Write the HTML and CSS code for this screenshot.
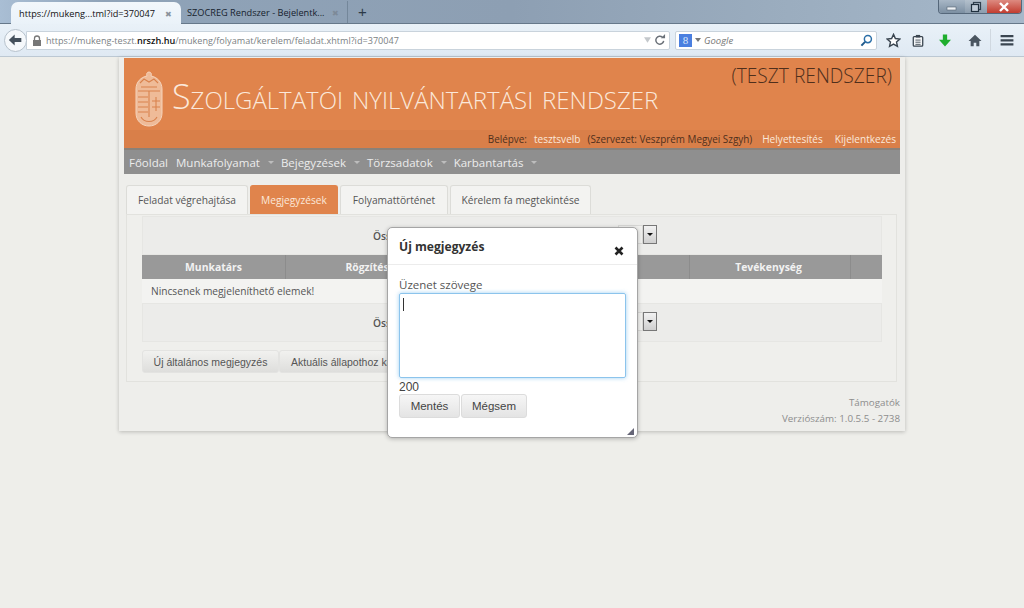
FILE: index.html
```html
<!DOCTYPE html>
<html lang="hu">
<head>
<meta charset="utf-8">
<title>Szolgáltatói nyilvántartási rendszer</title>
<link rel="stylesheet" href="styles.css">
</head>
<body>
<header class="chrome">
  <div class="tabstrip">
    <div class="tab tab-active"><span class="tab-label">https://mukeng...tml?id=370047</span><span class="tab-x">✖</span></div>
    <div class="tab tab-idle"><span class="tab-label">SZOCREG Rendszer - Bejelentk...</span><span class="tab-x">✖</span></div>
    <span class="tab-new">+</span>
    <div class="winbtns">
      <span class="win win-min"><svg width="12" height="8" viewBox="0 0 12 8"><rect x="1" y="4" width="9" height="3" fill="#eef2f6" stroke="#50606f" stroke-width=".6"/></svg></span>
      <span class="win win-max"><svg width="12" height="12" viewBox="0 0 12 12"><rect x="3.500" y="1.500" width="7" height="7" fill="none" stroke="#30404f" stroke-width="1.200"/><rect x="1.500" y="3.500" width="7" height="7" fill="#c0ccd8" stroke="#20303f" stroke-width="1.200"/></svg></span>
      <span class="win win-close"><svg width="12" height="10" viewBox="0 0 12 10"><path d="M2 1l8 8M10 1l-8 8" stroke="#fff" stroke-width="2.400"/></svg></span>
    </div>
  </div>
  <div class="toolbar">
    <span class="back"><svg width="15" height="14" viewBox="0 0 18 16"><path d="M1 8l7-6.500v4h8v5H8v4z" fill="#45505c"/></svg></span>
    <div class="urlbar">
      <svg class="lock" width="10" height="11" viewBox="0 0 10 11"><path d="M2.500 5V3.500a2.500 2.500 0 0 1 5 0V5" fill="none" stroke="#777" stroke-width="1.300"/><rect x="1" y="5" width="8" height="6" fill="#777"/></svg>
      <span class="url">https://mukeng-teszt.<b>nrszh.hu</b>/mukeng/folyamat/kerelem/feladat.xhtml?id=370047</span>
      <svg class="url-drop" width="7" height="6" viewBox="0 0 9 7"><path d="M0 0h9L4.500 7z" fill="#c4c8cc"/></svg>
      <svg class="url-reload" width="12" height="12" viewBox="0 0 13 13"><path d="M10.500 7.500a4.300 4.300 0 1 1-1.300-4" fill="none" stroke="#6a7078" stroke-width="1.600"/><path d="M7.500 4.500h4.500V0z" fill="#6a7078"/></svg>
    </div>
    <div class="searchbar">
      <span class="g-logo">8</span><svg class="search-drop" width="6" height="4" viewBox="0 0 6 4"><path d="M0 0h6L3 4z" fill="#777"/></svg>
      <span class="search-text">Google</span>
      <svg class="search-glass" width="13" height="13" viewBox="0 0 14 14"><circle cx="8.500" cy="5.500" r="3.800" fill="none" stroke="#2b6fa8" stroke-width="1.600"/><path d="M5.500 8.500L1.500 12.500" stroke="#1f5a8c" stroke-width="2.200"/></svg>
    </div>
    <div class="tools">
      <svg width="15" height="15" viewBox="0 0 16 16"><path d="M8 1.500l2 4.400 4.800.5-3.600 3.200 1 4.700L8 11.900l-4.200 2.400 1-4.700L1.200 6.400 6 5.900z" fill="#fff" stroke="#3a4550" stroke-width="1.500"/></svg>
      <svg class="tool-clip" width="12" height="13" viewBox="0 0 14 15"><rect x="1.500" y="3" width="11" height="11" rx="1" fill="#f4f6f8" stroke="#3a4550" stroke-width="1.500"/><rect x="4.500" y="1" width="5" height="3" fill="#3a4550"/><path d="M4 7h6M4 9.500h6M4 12h6" stroke="#3a4550"/></svg>
      <svg class="tool-down" width="12" height="13" viewBox="0 0 14 14"><path d="M4.500 0h5v6H14L7 14 0 6h4.500z" fill="#1fae2e"/></svg>
      <svg class="tool-home" width="14" height="13" viewBox="0 0 16 15"><path d="M8 1L0.500 8h2.500v6h3.500v-4h3v4H13V8h2.500z" fill="#4a5560"/></svg>
      <span class="tool-sep"></span>
      <svg class="tool-menu" width="14" height="11" viewBox="0 0 14 12"><path d="M0 0h14v2.500H0zM0 4.500h14V7H0zM0 9h14v2.500H0z" fill="#3a4550"/></svg>
    </div>
  </div>
</header>

<main class="card">
  <section class="brand">
    <div class="brand-top">
      <svg class="crest" width="28" height="56" viewBox="0 0 28 56">
        <path d="M14 1c2 0 3 2 2 4 6 1 11 6 11 13v24c0 8-6 13-13 13S1 50 1 42V18C1 11 6 6 12 5c-1-2 0-4 2-4z" fill="#efbb98" stroke="#f6d4bc"/>
        <path d="M3 20h22M3 26h10M3 31h10M3 36h10M3 41h10M14 20v26M17 30h8M17 36h8M21 26v14M5 12l4-4 5 3 5-3 4 4M6 16h16M6 46c3 6 13 6 16 0" fill="none" stroke="#d9824d" stroke-width="1.100"/>
      </svg>
      <h1 class="brand-title">Szolgáltatói nyilvántartási rendszer</h1>
      <div class="brand-test">(TESZT RENDSZER)</div>
    </div>
    <div class="userbar">
      <span class="dark">Belépve:</span>
      <span class="light user-name">tesztsvelb</span>
      <span class="dark org">(Szervezet: Veszprém Megyei Szgyh)</span>
      <span class="light">Helyettesítés</span>
      <span class="light logout">Kijelentkezés</span>
    </div>
  </section>
  <nav class="mainnav">
    <span class="nav-item nav-home">Főoldal</span>
    <span class="nav-item">Munkafolyamat<i class="caret"></i></span>
    <span class="nav-item">Bejegyzések<i class="caret"></i></span>
    <span class="nav-item">Törzsadatok<i class="caret"></i></span>
    <span class="nav-item">Karbantartás<i class="caret"></i></span>
  </nav>
  <div class="tabs">
    <span class="ptab ptab-1">Feladat végrehajtása</span>
    <span class="ptab ptab-on">Megjegyzések</span>
    <span class="ptab ptab-3">Folyamattörténet</span>
    <span class="ptab ptab-4">Kérelem fa megtekintése</span>
  </div>
  <section class="panel">
    <div class="pager"><b class="pager-label">Összesen: 0</b><span class="select-box"></span><span class="select-btn"><i></i></span></div>
    <div class="thead">
      <span class="th th-a">Munkatárs</span>
      <span class="th th-b">Rögzítés</span>
      <span class="th th-c"></span>
      <span class="th th-d">Tevékenység</span>
      <span class="th th-e"></span>
    </div>
    <div class="trow">Nincsenek megjeleníthető elemek!</div>
    <div class="pager"><b class="pager-label">Összesen: 0</b><span class="select-box"></span><span class="select-btn"><i></i></span></div>
    <div class="actions">
      <span class="btn btn-new">Új általános megjegyzés</span>
      <span class="btn btn-cur">Aktuális állapothoz kapcsolt megjegyzés</span>
    </div>
  </section>
  <footer class="foot">
    <div>Támogatók</div>
    <div>Verziószám: 1.0.5.5 - 2738</div>
  </footer>
</main>

<div class="modal">
  <div class="modal-head">
    <span class="modal-title">Új megjegyzés</span>
    <svg class="modal-x" width="10" height="10" viewBox="0 0 10 10"><path d="M1.500 1.500l7 7M8.500 1.500l-7 7" stroke="#222" stroke-width="2.600"/></svg>
  </div>
  <div class="modal-body">
    <div class="field-label">Üzenet szövege</div>
    <div class="textarea"><span class="cursor"></span></div>
    <div class="counter">200</div>
    <div class="modal-btns"><span class="mbtn mbtn-save">Mentés</span><span class="mbtn mbtn-cancel">Mégsem</span></div>
  </div>
  <svg class="grip" width="7" height="7" viewBox="0 0 8 8"><path d="M8 0v8H0z" fill="#667"/></svg>
</div>
</body>
</html>
```
FILE: styles.css
```css
* { box-sizing: border-box; }
html, body { margin: 0; padding: 0; }
body {
  width: 1024px; height: 608px; overflow: hidden; position: relative;
  background: #eeeeea; color: #555;
  font: 11px "Open Sans", "Liberation Sans", sans-serif;
}
.chrome { height: 57px; }
.tabstrip {
  height: 24px; display: flex; align-items: flex-end; padding-left: 11px; position: relative;
  background: linear-gradient(90deg, #a9bed4 0, #8fa3b8 10%, #8d9fb3 50%, #9aacbe 75%, #a6b8ca 100%);
  border-bottom: 1px solid #66788a;
}
.tab { height: 22px; display: flex; align-items: center; justify-content: space-between; font: 9.200px "Open Sans", sans-serif; white-space: nowrap; flex: none; }
.tab-active {
  width: 170px; padding: 0 9px 0 8px; margin-bottom: -1px;
  background: linear-gradient(#f2f7fb, #eaf2f9); border-radius: 7px 7px 0 0; color: #111;
}
.tab-idle { width: 167px; padding: 0 8px 0 6px; color: #16222e; border-right: 1px solid #74879a; }
.tab-idle .tab-x { color: #7d8a98; }
.tab-x { font-size: 8px; color: #8a939c; }
.tab-new { margin-left: 10px; align-self: center; font: 15px "Liberation Sans", sans-serif; color: #2c3a48; }
.winbtns {
  position: absolute; right: 2px; top: 0; width: 84px; height: 14px; display: flex;
  border: 1px solid #55677a; border-top: 0; border-radius: 0 0 4px 4px; overflow: hidden;
}
.win { display: flex; align-items: center; justify-content: center; }
.win-min { width: 26px; background: linear-gradient(#a8b7c6, #7c8fa2); }
.win-max { width: 22px; background: linear-gradient(#b3c0cc, #8c9dae); }
.win-close { flex: 1; background: linear-gradient(#dd8a80, #c23d30); }
.toolbar {
  height: 33px; display: flex; align-items: center; padding-left: 4px;
  background: linear-gradient(#e9f1f8, #dfe9f3); border-bottom: 1px solid #bcc8d3;
}
.back {
  width: 23px; height: 23px; border-radius: 50%; background: #f5f8fb; border: 1px solid #b7c2cc;
  display: flex; align-items: center; justify-content: center; flex: none; position: relative; z-index: 1;
}
.urlbar {
  width: 644px; height: 19px; margin-left: -1px; background: #fff; border: 1px solid #c9d3dc; border-radius: 0 2px 2px 0;
  display: flex; align-items: center; padding: 0 3px 0 5px; flex: none;
}
.lock { flex: none; }
.url { margin-left: 4px; font: 9.100px "Open Sans", sans-serif; color: #7b7f84; white-space: nowrap; flex: 1; }
.url b { color: #111; font-weight: 600; }
.url-drop { margin-right: 3px; }
.searchbar {
  width: 202px; height: 19px; margin-left: 5px; background: #fff; border: 1px solid #c9d3dc; border-radius: 2px;
  display: flex; align-items: center; padding: 0 3px; flex: none;
}
.g-logo {
  width: 13px; height: 13px; background: #4a7fe0; color: #dbe6fa; text-align: center;
  font: 11px/13px "Liberation Serif", serif;
}
.search-drop { margin-left: 3px; }
.search-text { margin-left: 3px; flex: 1; font: italic 9.500px "Open Sans", sans-serif; color: #777; }
.tools { display: flex; align-items: center; margin-left: 9px; flex: none; }
.tool-clip { margin-left: 11px; }
.tool-down { margin-left: 15px; }
.tool-home { margin-left: 17px; }
.tool-sep { width: 1px; height: 22px; background: #d0d8e0; margin-left: 8px; }
.tool-menu { margin-left: 9px; }

.card {
  position: absolute; left: 119px; top: 57px; width: 786px; height: 374px; padding: 1px 5px 0;
  background: #eeeeeb; box-shadow: 0 1px 4px rgba(0,0,0,.22);
}
.brand { height: 92px; background: #e0844c; display: flex; flex-direction: column; }
.brand-top { height: 72px; display: flex; align-items: flex-start; padding-left: 11px; }
.crest { margin-top: 13px; flex: none; }
.brand-title {
  margin: 15px 0 0 9px; font: 300 34.100px/46px "Open Sans", sans-serif; font-variant: small-caps;
  color: #fbe8da; white-space: nowrap;
}
.brand-test { margin: 5px 8px 0 auto; font: 300 19.200px/26px "Open Sans", sans-serif; color: #4f2f1c; white-space: nowrap; }
.userbar {
  height: 20px; background: #d97f49; border-bottom: 2px solid #8a8179; display: flex; align-items: center;
  justify-content: flex-end; padding-right: 4px; font-size: 9.900px;
}
.dark { color: #4f2f1c; }
.light { color: #fbe8da; }
.user-name { margin-left: 7px; }
.org { margin: 0 10px 0 7px; }
.userbar .light { font-size: 10.100px; }
.logout { margin-left: 12px; }
.mainnav { height: 24px; background: #8f8f8f; display: flex; align-items: center; padding-left: 5px; font-size: 11.500px; color: #ececec; }
.nav-item { display: flex; align-items: center; margin-right: 7px; }
.nav-home { margin-right: 8px; }
.caret { width: 0; height: 0; border: 3.500px solid transparent; border-top-color: #bdbdbd; border-bottom: 0; margin-left: 8px; }

.tabs { display: flex; height: 29px; margin: 11px 0 0 2px; gap: 2px; position: relative; z-index: 1; }
.ptab {
  height: 29px; display: flex; align-items: center; justify-content: center; font-size: 10.200px; color: #555;
  background: #f3f3f1; border: 1px solid #dcdcd8; border-bottom: 0; border-radius: 3px 3px 0 0;
}
.ptab-1 { width: 122px; }
.ptab-on { width: 88px; background: #e0844c; color: #fbe8da; border-color: #e0844c; }
.ptab-3 { width: 108px; }
.ptab-4 { width: 141px; }
.panel { margin: 0 3px 0 2px; height: 168px; border: 1px solid #e2e2de; padding: 1px 14px 0 15px; background: #efefec; }
.pager {
  height: 39px; background: #ececea; border: 1px solid #e6e6e3; display: flex; align-items: center; position: relative;
  padding-left: 230px; font-size: 10.200px;
}
.pager-label { color: #555; white-space: nowrap; font-weight: 600; }
.select-box { position: absolute; left: 475px; top: 8px; width: 25px; height: 19px; background: #f0f0ee; border: 1px solid #d8d8d6; }
.select-btn {
  position: absolute; left: 500px; top: 8px; width: 14px; height: 19px; background: linear-gradient(#f2f2f2, #cfcfcf);
  border: 1px solid #777; display: flex; align-items: center; justify-content: center;
}
.select-btn i { width: 0; height: 0; border: 3px solid transparent; border-top-color: #111; border-bottom: 0; }
.thead { height: 24px; background: #999; display: flex; }
.th {
  height: 24px; display: flex; align-items: center; justify-content: center; color: #f2f2f2; font-size: 10.400px; font-weight: 700;
  border-right: 1px solid #8c8c8c;
}
.th-a { width: 144px; }
.th-b { width: 185px; padding-right: 22px; }
.th-c { width: 219px; }
.th-d { width: 161px; padding-right: 3px; }
.th-e { flex: 1; border-right: 0; }
.trow { height: 24px; background: #f3f3f1; display: flex; align-items: center; padding-left: 9px; font-size: 10.200px; color: #555; }
.actions { display: flex; margin-top: 8px; }
.btn {
  height: 23px; display: flex; align-items: center; justify-content: center; font: 10.500px "Liberation Sans", sans-serif; color: #555;
  background: linear-gradient(#f1f1ef, #dededc); border: 1px solid #e3e3e1; border-radius: 3px; white-space: nowrap; flex: none;
}
.btn-new { width: 137px; }
.btn-cur { width: 210px; justify-content: flex-start; padding-left: 11px; }
.foot { margin-top: 13px; text-align: right; font-size: 9.800px; line-height: 16px; color: #8d8d8d; }

.modal {
  position: absolute; left: 387px; top: 227px; width: 251px; height: 211px;
  background: #fff; border: 1px solid #a5a5a5; border-radius: 5px; box-shadow: 0 1px 4px rgba(0,0,0,.25);
}
.modal-head { height: 37px; border-bottom: 1px solid #ececec; display: flex; align-items: flex-start; justify-content: space-between; padding: 11px 13px 0 11px; }
.modal-title { font: 700 12.100px/16px "Open Sans", sans-serif; color: #333; }
.modal-x { margin-top: 7px; }
.modal-body { padding: 12px 11px 0 11px; }
.field-label { font: 11.500px/16px "Open Sans", sans-serif; color: #555; }
.textarea { height: 85px; width: 227px; border: 1px solid #8cc4ec; border-radius: 2px; box-shadow: 0 0 4px rgba(120,190,240,.7); padding: 4px 3px; }
.cursor { display: block; width: 1px; height: 13px; background: #333; }
.counter { font: 12px/14px "Liberation Sans", sans-serif; color: #444; margin-top: 2px; }
.modal-btns { display: flex; gap: 1px; }
.mbtn {
  height: 24px; display: flex; align-items: center; justify-content: center; font: 11.500px "Liberation Sans", sans-serif; color: #444;
  background: linear-gradient(#f6f6f6, #e4e4e4); border: 1px solid #dcdcdc; border-radius: 3px;
}
.mbtn-save { width: 61px; }
.mbtn-cancel { width: 66px; }
.grip { position: absolute; right: 3px; bottom: 2px; }
```
